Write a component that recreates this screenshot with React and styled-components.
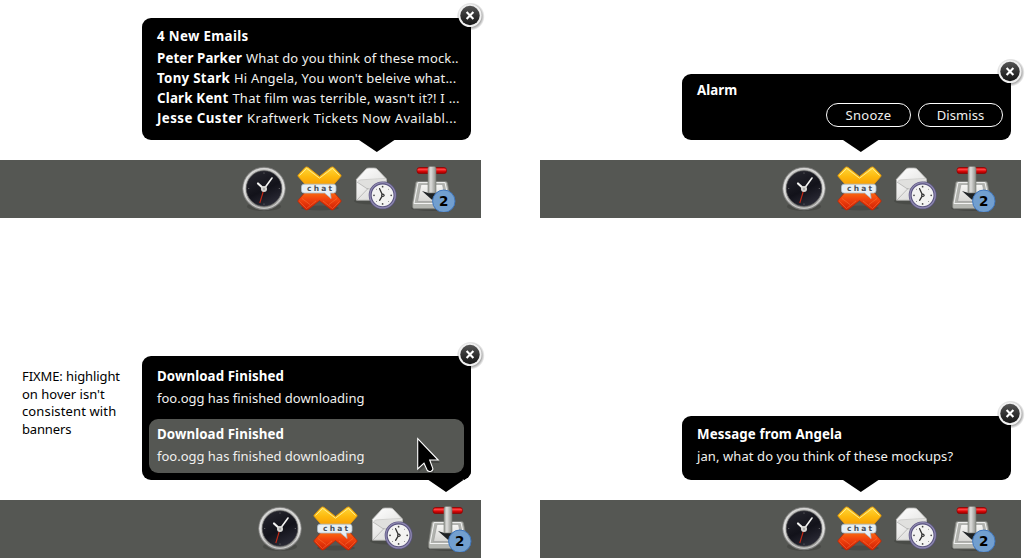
import React from "react";
import styled, { createGlobalStyle } from "styled-components";

const GlobalStyle = createGlobalStyle`
  body { margin: 0; background: #fff; overflow: hidden; font-family: "Noto Sans", "Open Sans", sans-serif; font-size: 13px; }
`;

const Page = styled.main`
  display: grid;
  grid-template-columns: 481px 481px;
  grid-template-rows: 218px 340px;
  column-gap: 59px;
  width: 1027px;
  height: 558px;
`;

const Scene = styled.section`
  display: flex;
  flex-direction: column;
  justify-content: flex-end;
`;

const PopoverRow = styled.div`
  display: flex;
  justify-content: flex-end;
  padding: 0 10px 20px 22px;
`;

const Note = styled.p`
  flex: 1;
  margin: 12px 0 0;
  line-height: 17.5px;
  color: #000;
  white-space: nowrap;
`;

const Popover = styled.div`
  position: relative;
  box-sizing: border-box;
  width: 329px;
  height: ${(p) => p.$height}px;
  padding: ${(p) => p.$top ?? 8}px 7px 0;
  border-radius: 9px;
  background: #000;
  color: #f0f0ee;
`;

const Tail = styled.svg`
  position: absolute;
  left: ${(p) => p.$tip - 18}px;
  bottom: -12px;
`;

const Close = styled.svg`
  position: absolute;
  right: -15px;
  top: ${(p) => p.$top ?? -19}px;
`;

const Pointer = styled.svg`
  position: absolute;
  left: 272px;
  top: 80px;
`;

const Title = styled.div`
  padding: 0 8px;
  line-height: 20px;
  white-space: nowrap;
`;

const Line = styled.div`
  display: flex;
  gap: 4px;
  padding: 0 8px;
  line-height: 20px;
  white-space: nowrap;
`;

const Message = styled.div`
  box-sizing: border-box;
  height: ${(p) => p.$height ?? 54}px;
  padding-top: 5px;
  border-radius: 9px;
  background: ${(p) => (p.$hover ? "#555753" : "transparent")};
`;

const Lines = styled.div`
  padding-top: 2px;
`;

const Text = styled.span`
  font-size: ${(p) => p.$size ?? 13}px;
  font-weight: ${(p) => (p.$bold ? 700 : 400)};
  color: ${(p) => (p.$bold ? "#fff" : "inherit")};
  letter-spacing: ${(p) => p.$tracking ?? 0}px;
`;

const Actions = styled.div`
  display: flex;
  justify-content: flex-end;
  gap: 7px;
  padding: 3px 1px 0 0;
`;

const Pill = styled.button`
  box-sizing: border-box;
  width: 85px;
  height: 24px;
  padding: 1px 0 0;
  border: 1px solid #fff;
  border-radius: 12px;
  background: #000;
  color: #f0f0ee;
  font: inherit;
  line-height: 21px;
`;

const Bar = styled.div`
  display: flex;
  justify-content: flex-end;
  gap: 8px;
  box-sizing: border-box;
  height: 58px;
  padding: 4px ${(p) => p.$inset ?? 25}px 0 0;
  background: #555753;
`;

function CloseButton({ top }) {
  return (
    <Close $top={top} width="32" height="32" viewBox="0 0 32 32">
      <defs>
        <radialGradient id="shade"><stop offset=".7" stopColor="#000" stopOpacity=".45" /><stop offset="1" stopColor="#000" stopOpacity="0" /></radialGradient>
        <linearGradient id="knob" x2="0" y2="1"><stop stopColor="#555" /><stop offset=".5" stopColor="#333" /><stop offset="1" stopColor="#161616" /></linearGradient>
      </defs>
      <circle cx="16.7" cy="17.5" r="14" fill="url(#shade)" />
      <circle cx="16" cy="16.5" r="11.6" fill="#f0f0f0" />
      <circle cx="16" cy="16.5" r="9.7" fill="url(#knob)" />
      <path d="M12.6 13.1l6.8 6.8M19.4 13.1l-6.8 6.8" stroke="#fff" strokeWidth="2.1" />
    </Close>
  );
}

function ClockIcon() {
  return (
    <svg width="48" height="48" viewBox="0 0 48 48">
      <defs>
        <linearGradient id="rim" x2="0" y2="1"><stop stopColor="#b8b8b6" /><stop offset=".5" stopColor="#d8d8d6" /><stop offset="1" stopColor="#8c8c8a" /></linearGradient>
        <linearGradient id="dial" x1=".2" x2=".7" y2="1"><stop stopColor="#26262e" /><stop offset=".55" stopColor="#12121a" /><stop offset="1" stopColor="#2c2c38" /></linearGradient>
      </defs>
      <ellipse cx="24" cy="42.5" rx="17" ry="4.5" fill="#000" opacity=".15" />
      <circle cx="24" cy="24.5" r="21.3" fill="url(#rim)" stroke="#7a7a78" strokeWidth=".8" />
      <circle cx="24" cy="24.5" r="19.8" fill="none" stroke="#eee" strokeWidth=".9" opacity=".75" />
      <circle cx="24" cy="24.5" r="17.8" fill="url(#dial)" stroke="#555" strokeWidth=".7" />
      <g fill="#777"><circle cx="24" cy="9" r=".6" /><circle cx="24" cy="40" r=".6" /><circle cx="8.7" cy="24.5" r=".6" /><circle cx="39.3" cy="24.5" r=".6" /></g>
      <path d="M23.7 26L19.8 39" stroke="#c62a16" strokeWidth="1.1" />
      <path d="M24 25l8-11" stroke="#f4f4f2" strokeWidth="1.6" strokeLinecap="round" />
      <path d="M24 25l-6-5.5" stroke="#f4f4f2" strokeWidth="2.2" strokeLinecap="round" />
      <circle cx="24" cy="25" r="3" fill="#d7d7d4" /><circle cx="24" cy="25" r="1.2" fill="#aaa" />
    </svg>
  );
}

function ChatIcon() {
  return (
    <svg width="48" height="48" viewBox="0 0 48 48">
      <defs>
        <linearGradient id="gold" x2="0" y2="1"><stop stopColor="#ffd83a" /><stop offset=".5" stopColor="#fdb90e" /><stop offset="1" stopColor="#f79a06" /></linearGradient>
        <linearGradient id="ember" x2="0" y2="1"><stop stopColor="#fa7a14" /><stop offset=".45" stopColor="#f2440e" /><stop offset="1" stopColor="#cf2004" /></linearGradient>
      </defs>
      <ellipse cx="24" cy="44" rx="19" ry="2.5" fill="#000" opacity=".15" />
      <path d="M11 26H36L44.800 36.200q.6.800 0 1.600L37.800 45.500q-1.500 1-3 0L23.500 36.500 12.200 45.500q-1.500 1-3 0L2.200 37.800q-.6-.8 0-1.600z" fill="url(#ember)" stroke="#bd2706" strokeWidth=".8" strokeLinejoin="round" />
      <path d="M3.500 37.500L10.500 44.500 20 37M43.500 37.500l-7 7L27 37M6 34.500l8 6M41 34.500l-8 6" fill="none" stroke="#ff8a4a" strokeWidth=".8" opacity=".5" />
      <path d="M11 22.500L2.200 12.500q-.6-.8 0-1.600L9.200 3.400q1.500-1 3 0L23.500 12.500 34.800 3.400q1.500-1 3 0l7 7.500q.6.800 0 1.600L36 22.500z" fill="url(#gold)" stroke="#e89a08" strokeWidth=".8" strokeLinejoin="round" />
      <path d="M3.500 11.500L10.700 4.400l12.800 9.800L36.300 4.400l7.200 7.100" fill="none" stroke="#fff09a" strokeWidth=".9" />
      <path d="M8 20.200h29.500a2.500 2.500 0 012.500 2.500v3.800a2.500 2.500 0 01-2.500 2.500h-3.200l.8 5.500L28.600 29H8a2.500 2.500 0 01-2.500-2.500v-3.800A2.500 2.500 0 018 20.200z" fill="#e8eff4" stroke="#a9bccb" strokeWidth=".8" />
      <text x="11" y="27.200" textLength="25" fontFamily="DejaVu Sans" fontSize="7.500" fontWeight="700" fill="#46505a">chat</text>
    </svg>
  );
}

function MailIcon() {
  const ticks = [0, 45, 90, 135, 180, 225, 270, 315];
  return (
    <svg width="48" height="48" viewBox="0 0 48 48">
      <defs>
        <linearGradient id="paper" x2=".6" y2="1"><stop stopColor="#fff" /><stop offset="1" stopColor="#dcdcda" /></linearGradient>
      </defs>
      <ellipse cx="20" cy="37" rx="18" ry="3.5" fill="#000" opacity=".12" />
      <path d="M4.5 15.2L14 5q1.2-1 3-1h5q2 0 3 1l9.500 10v21.200H4.500z" fill="url(#paper)" stroke="#b5b5b3" strokeWidth=".8" strokeLinejoin="round" />
      <path d="M6.500 19Q6 16 9 16L32.500 15.500 34 18 20 24.500q-2.500 1-5-.1z" fill="#e0e0de" />
      <path d="M5 18L15.500 25 5 36M34 17L20 24.500q-2.500 1.200-5-.1" fill="none" stroke="#b0b0ae" strokeWidth=".8" />
      <path d="M6 18q0-2 3-2.200l24-1.300" fill="none" stroke="#c4c4c2" strokeWidth=".7" />
      <circle cx="30.6" cy="31.3" r="12.400" fill="#f3f3f2" stroke="#5a5480" strokeWidth="3" />
      <circle cx="30.6" cy="31.3" r="12.600" fill="none" stroke="#8f89b0" strokeWidth="1.300" />
      {ticks.map((a) => (
        <circle key={a} cx="30.6" cy="22.7" r={a % 90 ? 0.4 : 0.85} fill="#444" transform={`rotate(${a} 30.6 31.3)`} />
      ))}
      <path d="M30.6 31.3l-3-6.600M30.600 31.300l-3 5" stroke="#333" strokeWidth="1.300" strokeLinecap="round" />
      <circle cx="30.9" cy="31.3" r="1.7" fill="#333" /><circle cx="30.9" cy="31.3" r=".6" fill="#eee" />
    </svg>
  );
}

function DownloadIcon() {
  return (
    <svg width="48" height="48" viewBox="0 0 48 48">
      <defs>
        <linearGradient id="tray" x2="0" y2="1"><stop stopColor="#f6f6f4" /><stop offset="1" stopColor="#d6d6d3" /></linearGradient>
        <linearGradient id="shaft"><stop stopColor="#9a9c97" /><stop offset=".35" stopColor="#dededc" /><stop offset="1" stopColor="#8d8f8a" /></linearGradient>
        <linearGradient id="grip" x2="0" y2="1"><stop stopColor="#d40000" /><stop offset=".35" stopColor="#ff4545" /><stop offset=".6" stopColor="#dc0808" /><stop offset="1" stopColor="#980000" /></linearGradient>
      </defs>
      <ellipse cx="24" cy="44" rx="21" ry="3" fill="#000" opacity=".18" />
      <path d="M9.5 17.4h28q1.600 0 2 1.800L43 38v5q0 1.800-2 1.800H6.300Q4.600 44.800 4.600 43v-4L7.700 19q.3-1.600 1.800-1.600z" fill="#b4b6b1" stroke="#777974" strokeWidth=".8" />
      <path d="M10 18.600h27L41.500 39.500H6z" fill="#b0b2ad" stroke="#f2f2f2" strokeWidth="1" />
      <path d="M13 20.500h21.500l3.500 17H9.500z" fill="url(#tray)" stroke="#999" strokeWidth=".6" />
      <path d="M14 27l6.300 2v-5h7.700v5l5-1.500L24.200 36z" fill="#1e2224" />
      <rect x="9" y="3.500" width="29.500" height="6" rx="2.600" fill="url(#grip)" stroke="#8c0000" strokeWidth=".7" />
      <path d="M20 4.200q0-1.700 2-1.700h4q2 0 2 1.700V29h-8z" fill="url(#shaft)" stroke="#777974" strokeWidth=".6" />
      <circle cx="35.8" cy="37.2" r="11.2" fill="#729fcf" stroke="#3f76bd" strokeWidth="1" />
      <text x="35.8" y="42.1" textAnchor="middle" fontFamily="DejaVu Sans" fontSize="13.5" fontWeight="700" fill="#000">2</text>
    </svg>
  );
}

function Dock({ inset }) {
  return (
    <Bar $inset={inset}>
      <ClockIcon />
      <ChatIcon />
      <MailIcon />
      <DownloadIcon />
    </Bar>
  );
}

function Bubble({ height, top, tip, corner, closeTop, children }) {
  return (
    <Popover $height={height} $top={top}>
      {children}
      <Tail $tip={tip} width="43" height="30" viewBox="0 0 43 30">
        <path d={corner ? "M0.5 18L18 30L40.500 14.600Q43 13 43 9H37V18z" : "M0 18H35.500L17.800 30z"} />
      </Tail>
      <CloseButton top={closeTop} />
    </Popover>
  );
}

function Download() {
  return (
    <>
      <Title><Text $bold $size={13.3} $tracking={0.09}>Download Finished</Text></Title>
      <Lines><Line><Text $tracking={-0.01}>foo.ogg has finished downloading</Text></Line></Lines>
    </>
  );
}

const emails = [
  ["Peter Parker", 0.12, "What do you think of these mock..", 0.14],
  ["Tony Stark", 0.3, "Hi Angela, You won't beleive what...", 0.18],
  ["Clark Kent", 0.21, "That film was terrible, wasn't it?! I ...", 0.24],
  ["Jesse Custer", 0.45, "Kraftwerk Tickets Now Availabl...", 0.38],
];

export default function App() {
  return (
    <Page>
      <GlobalStyle />
      <Scene>
        <PopoverRow>
          <Bubble height={122} tip={235}>
            <Title><Text $bold $size={13.3} $tracking={0.35}>4 New Emails</Text></Title>
            <Lines>
              {emails.map(([name, nameTracking, text, tracking]) => (
                <Line key={name}>
                  <Text $bold $size={13.3} $tracking={nameTracking}>{name}</Text>
                  <Text $tracking={tracking}>{text}</Text>
                </Line>
              ))}
            </Lines>
          </Bubble>
        </PopoverRow>
        <Dock />
      </Scene>
      <Scene>
        <PopoverRow>
          <Bubble height={66} top={6} tip={179}>
            <Title><Text $bold $size={13.3} $tracking={0.05}>Alarm</Text></Title>
            <Actions>
              <Pill><Text $tracking={0.3}>Snooze</Text></Pill>
              <Pill><Text $tracking={0.1}>Dismiss</Text></Pill>
            </Actions>
          </Bubble>
        </PopoverRow>
        <Dock />
      </Scene>
      <Scene>
        <PopoverRow>
          <Note>
            <Text $tracking={-0.1}>FIXME: highlight</Text><br />
            <Text>on hover isn't</Text><br />
            <Text $tracking={0.13}>consistent with</Text><br />
            <Text $tracking={-0.15}>banners</Text>
          </Note>
          <Bubble height={124} top={5} tip={304} closeTop={-18} corner>
            <Message $height={58}><Download /></Message>
            <Message $hover><Download /></Message>
            <Pointer width="28" height="42" viewBox="0 0 28 42">
              <path d="M4.5 5V36l7-6 3.500 7.500q1.500 1.500 3.500.8 2-1 1.500-2.800L17 27h9z" fill="#000" opacity=".2" />
              <path d="M3.700 2.700V33l6.300-5.800 3.300 7.300q1.500 1.500 3.700.7 2.300-1 1.800-2.900L15.700 24h8.500z" fill="#000" stroke="#fff" strokeWidth="1.100" />
            </Pointer>
          </Bubble>
        </PopoverRow>
        <Dock inset={9} />
      </Scene>
      <Scene>
        <PopoverRow>
          <Bubble height={64} tip={179}>
            <Title><Text $bold $size={13.3} $tracking={0.1}>Message from Angela</Text></Title>
            <Lines><Line><Text $tracking={0.09}>jan, what do you think of these mockups?</Text></Line></Lines>
          </Bubble>
        </PopoverRow>
        <Dock />
      </Scene>
    </Page>
  );
}
